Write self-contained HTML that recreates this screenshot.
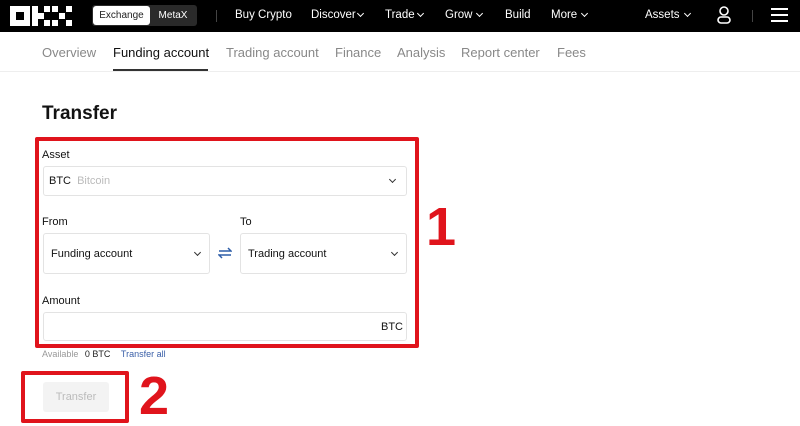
<!DOCTYPE html>
<html><head><meta charset="utf-8"><style>
*{margin:0;padding:0;box-sizing:border-box}
body{width:800px;height:425px;overflow:hidden;background:#fff;font-family:"Liberation Sans",sans-serif;position:relative;color:#121212}
.a{position:absolute}
.nav{left:0;top:0;width:800px;height:32px;background:#000}
.ni{color:#fff;font-size:11.5px;top:9px;position:absolute}
.sub{font-size:13px;color:#888;top:45px;position:absolute}
.lbl{font-size:11px;color:#111;position:absolute}
.box{position:absolute;border:1px solid #e3e3e3;border-radius:3px;background:#fff}
.chev{position:absolute;width:5px;height:5px;border-right:1.3px solid #333;border-bottom:1.3px solid #333;transform:rotate(45deg)}
.wch{position:absolute;width:5px;height:5px;border-right:1.3px solid #fff;border-bottom:1.3px solid #fff;transform:rotate(45deg);top:11px}
.red{position:absolute;border:4px solid #e0141c;border-radius:2px}
.num{position:absolute;color:#e0141c;font-weight:bold;font-size:54px;line-height:1}
</style></head><body>
<div class="a nav"></div>
<svg class="a" style="left:10px;top:6px" width="62" height="20" viewBox="0 0 62 20" fill="#fff">
<rect x="0" y="0" width="20" height="20"/><rect x="6" y="6" width="8" height="8" fill="#000"/>
<rect x="22" y="0" width="6" height="20"/><rect x="28" y="7" width="6" height="6"/><rect x="34" y="0" width="6" height="6"/><rect x="34" y="14" width="6" height="6"/>
<rect x="42" y="0" width="6" height="6"/><rect x="56" y="0" width="6" height="6"/><rect x="49" y="7" width="6" height="6"/><rect x="42" y="14" width="6" height="6"/><rect x="56" y="14" width="6" height="6"/>
</svg>
<div class="a" style="left:92px;top:5px;width:105px;height:21px;background:#2a2a2a;border-radius:3px"></div>
<div class="a" style="left:93px;top:6px;width:57px;height:19px;background:#fff;border-radius:3px;font-size:10px;color:#222;text-align:center;line-height:19px">Exchange</div>
<div class="a" style="left:150px;top:6px;width:46px;height:19px;font-size:10px;color:#fff;text-align:center;line-height:19px">MetaX</div>
<div class="a" style="left:216px;top:10px;width:1px;height:12px;background:#444"></div>
<span class="ni" style="left:235px">Buy Crypto</span>
<span class="ni" style="left:311px">Discover</span><i class="wch" style="left:358px"></i>
<span class="ni" style="left:385px">Trade</span><i class="wch" style="left:418px"></i>
<span class="ni" style="left:445px">Grow</span><i class="wch" style="left:477px"></i>
<span class="ni" style="left:505px">Build</span>
<span class="ni" style="left:551px">More</span><i class="wch" style="left:582px"></i>
<span class="ni" style="left:645px">Assets</span><i class="wch" style="left:685px"></i>
<svg class="a" style="left:716px;top:6px" width="16" height="19" viewBox="0 0 16 19" fill="none" stroke="#fff" stroke-width="1.6"><circle cx="8" cy="5" r="4"/><rect x="2" y="11" width="12" height="6" rx="3"/></svg>
<div class="a" style="left:752px;top:10px;width:1px;height:12px;background:#444"></div>
<div class="a" style="left:771px;top:8px;width:17px;height:2px;background:#fff"></div>
<div class="a" style="left:771px;top:14px;width:17px;height:2px;background:#fff"></div>
<div class="a" style="left:771px;top:20px;width:17px;height:2px;background:#fff"></div>

<span class="sub" style="left:42px">Overview</span>
<span class="sub" style="left:113px;color:#111">Funding account</span>
<span class="sub" style="left:226px">Trading account</span>
<span class="sub" style="left:335px">Finance</span>
<span class="sub" style="left:397px">Analysis</span>
<span class="sub" style="left:461px">Report center</span>
<span class="sub" style="left:557px">Fees</span>
<div class="a" style="left:0;top:71px;width:800px;height:1px;background:#eee"></div>
<div class="a" style="left:113px;top:69px;width:95px;height:2px;background:#333"></div>

<div class="a" style="left:42px;top:103px;font-size:19px;font-weight:bold">Transfer</div>

<span class="lbl" style="left:42px;top:149px">Asset</span>
<div class="box" style="left:43px;top:166px;width:364px;height:30px"></div>
<span class="a" style="left:49px;top:175px;font-size:11px">BTC <span style="color:#bbb;margin-left:3px">Bitcoin</span></span>
<i class="chev" style="left:390px;top:177px"></i>

<span class="lbl" style="left:42px;top:216px">From</span>
<span class="lbl" style="left:240px;top:216px">To</span>
<div class="box" style="left:43px;top:233px;width:167px;height:41px"></div>
<span class="a" style="left:51px;top:248px;font-size:11px">Funding account</span>
<i class="chev" style="left:195px;top:250px"></i>
<div class="box" style="left:240px;top:233px;width:167px;height:41px"></div>
<span class="a" style="left:248px;top:248px;font-size:11px">Trading account</span>
<i class="chev" style="left:392px;top:250px"></i>
<svg class="a" style="left:218px;top:247px" width="14" height="12" viewBox="0 0 14 12" fill="none" stroke="#2f5ea8" stroke-width="1.5"><path d="M1 4h12l-3-3M13 8H1l3 3"/></svg>

<span class="lbl" style="left:42px;top:295px">Amount</span>
<div class="box" style="left:43px;top:312px;width:364px;height:29px"></div>
<span class="a" style="left:381px;top:321px;font-size:11px">BTC</span>

<span class="a" style="left:42px;top:349px;font-size:9px;color:#999">Available <span style="color:#222;margin-left:4px">0 BTC</span> <span style="color:#3a5fa8;margin-left:8px">Transfer all</span></span>

<div class="a" style="left:43px;top:382px;width:66px;height:30px;background:#f3f3f3;border-radius:3px;color:#bbb;font-size:11px;text-align:center;line-height:30px">Transfer</div>

<div class="red" style="left:35px;top:137px;width:384px;height:211px"></div>
<div class="red" style="left:21px;top:371px;width:108px;height:52px"></div>
<div class="num" style="left:426px;top:200px">1</div>
<div class="num" style="left:139px;top:369px">2</div>
</body></html>
